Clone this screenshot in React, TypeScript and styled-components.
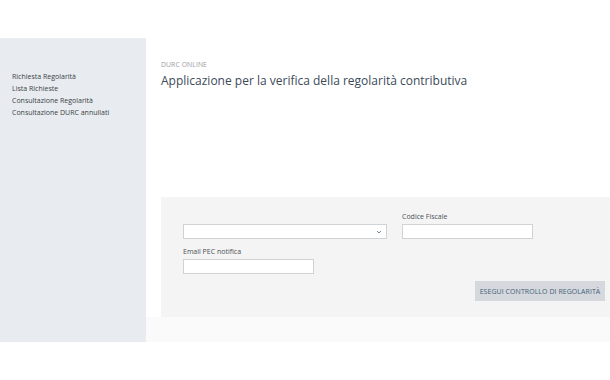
import styled, { createGlobalStyle } from 'styled-components';

const GlobalStyle = createGlobalStyle`
  html, body {
    margin: 0;
    background: #ffffff;
    font-family: "Open Sans", "Noto Sans", sans-serif;
  }
`;

const Page = styled.div`
  width: 610px;
  height: 380px;
  overflow: hidden;
  padding-top: 38px;
  box-sizing: border-box;
`;

const Layout = styled.div`
  display: grid;
  grid-template-columns: 146px 1fr;
  height: 304px;
`;

const Sidebar = styled.nav`
  background: #e8ecf0;
  padding: 33px 0 0 12px;
  display: flex;
  flex-direction: column;
`;

const NavLink = styled.a`
  font-size: 7px;
  line-height: 12px;
  color: #3a3f45;
  text-decoration: none;
`;

const Main = styled.main`
  display: flex;
  flex-direction: column;
`;

const Header = styled.header`
  padding: 22px 0 0 15px;
  height: 159px;
  box-sizing: border-box;
`;

const Eyebrow = styled.div`
  font-size: 6.8px;
  line-height: 10px;
  color: #9a9ea3;
  letter-spacing: 0.1px;
`;

const Title = styled.h1`
  margin: 3px 0 0;
  font-size: 12px;
  line-height: 16px;
  font-weight: 400;
  color: #3b4a59;
`;

const Panel = styled.section`
  margin-left: 15px;
  height: 120px;
  background: #f4f4f4;
  padding: 14px 5px 0 22px;
  box-sizing: border-box;
  display: grid;
  grid-template-columns: 204px 131px 1fr;
  column-gap: 15px;
  grid-template-rows: 28px 35px auto;
`;

const Footer = styled.div`
  flex: 1;
  background: #fafafa;
`;

const Field = styled.div<{ $col: number }>`
  grid-column: ${(p) => p.$col};
  display: flex;
  flex-direction: column;
  justify-content: flex-end;
`;

const Label = styled.label`
  font-size: 7px;
  line-height: 10px;
  color: #4a4f55;
  margin-bottom: 2px;
`;

const Input = styled.div<{ $w?: number }>`
  width: ${(p) => (p.$w ? `${p.$w}px` : '100%')};
  height: 15px;
  box-sizing: border-box;
  background: #ffffff;
  border: 1px solid #cfd3d6;
`;

const Select = styled(Input)`
  display: flex;
  align-items: center;
  justify-content: flex-end;
  padding-right: 4px;
`;

const ButtonRow = styled.div`
  grid-column: 1 / -1;
  display: flex;
  justify-content: flex-end;
  align-items: flex-start;
  padding-top: 7px;
`;

const Button = styled.button`
  width: 130px;
  height: 20px;
  border: none;
  background: #d5d8dc;
  color: #44607a;
  font-family: "Open Sans", "Noto Sans", sans-serif;
  font-size: 7px;
  padding: 0;
  letter-spacing: 0.05px;
`;

export default function App() {
  return (
    <Page>
      <GlobalStyle />
      <Layout>
        <Sidebar>
          <NavLink>Richiesta Regolarità</NavLink>
          <NavLink>Lista Richieste</NavLink>
          <NavLink>Consultazione Regolarità</NavLink>
          <NavLink>Consultazione DURC annullati</NavLink>
        </Sidebar>
        <Main>
          <Header>
            <Eyebrow>DURC ONLINE</Eyebrow>
            <Title>Applicazione per la verifica della regolarità contributiva</Title>
          </Header>
          <Panel>
            <Field $col={1}>
              <Select>
                <svg width="6" height="4" viewBox="0 0 6 4">
                  <path d="M1 1 L3 3 L5 1" fill="none" stroke="#6d8aa3" strokeWidth="1" />
                </svg>
              </Select>
            </Field>
            <Field $col={2}>
              <Label>Codice Fiscale</Label>
              <Input />
            </Field>
            <Field $col={1}>
              <Label>Email PEC notifica</Label>
              <Input $w={131} />
            </Field>
            <ButtonRow>
              <Button>ESEGUI CONTROLLO DI REGOLARITÀ</Button>
            </ButtonRow>
          </Panel>
          <Footer />
        </Main>
      </Layout>
    </Page>
  );
}
